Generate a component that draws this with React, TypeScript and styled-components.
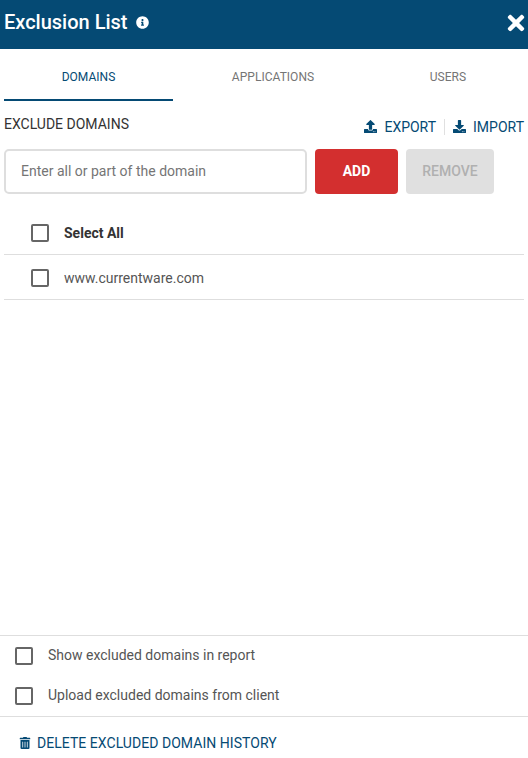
import React from "react";
import styled, { createGlobalStyle } from "styled-components";
import { FaInfoCircle, FaTimes, FaUpload, FaDownload, FaTrashAlt } from "react-icons/fa";

const Global = createGlobalStyle`
  html, body { margin: 0; padding: 0; background: #fff; }
  body { font-family: Roboto, "Liberation Sans", sans-serif; }
  * { box-sizing: border-box; }
`;

const Panel = styled.div`
  width: 528px;
  height: 758px;
  display: flex;
  flex-direction: column;
  overflow: hidden;
`;

const Header = styled.header`
  height: 49px;
  flex: none;
  background: #054a74;
  color: #fff;
  display: flex;
  align-items: center;
  justify-content: space-between;
  padding: 0 0 5px 4px;
`;

const TitleGroup = styled.div`
  display: flex;
  align-items: center;
  gap: 8px;
`;

const Title = styled.h1`
  margin: 0;
  font-size: 20px;
  line-height: 24px;
  font-weight: 500;
`;

const CloseIcon = styled(FaTimes)`
  font-size: 24px;
  margin-top: 2px;
`;

const Tabs = styled.nav`
  height: 52px;
  flex: none;
  display: grid;
  grid-template-columns: 169px 200px 150px;
  padding-left: 4px;
`;

const Tab = styled.div<{ $active?: boolean }>`
  display: flex;
  align-items: center;
  justify-content: center;
  padding-top: 6px;
  font-size: 12px;
  letter-spacing: 0.03px;
  color: ${(p) => (p.$active ? "#054a74" : "#757575")};
  border-bottom: 2px solid ${(p) => (p.$active ? "#054a74" : "transparent")};
`;

const Body = styled.main`
  flex: 1;
  display: flex;
  flex-direction: column;
  padding: 0 4px;
`;

const SectionBar = styled.div`
  height: 48px;
  display: flex;
  align-items: center;
  justify-content: space-between;
`;

const SectionTitle = styled.h2`
  margin: 0 0 2px;
  font-size: 14px;
  line-height: 16px;
  font-weight: 400;
  color: #333;
`;

const Actions = styled.div`
  display: flex;
  align-items: center;
  margin-top: 3px;
`;

const ActionLink = styled.span`
  display: inline-flex;
  align-items: center;
  gap: 7px;
  font-size: 14px;
  color: #054a74;
`;

const Divider = styled.span`
  width: 1px;
  height: 16px;
  background: #e0e0e0;
  margin: 0 8px;
`;

const Form = styled.div`
  display: flex;
  gap: 8px;
  height: 45px;
`;

const Field = styled.div`
  width: 303px;
  border: 2px solid #dedede;
  border-radius: 5px;
  padding: 0 15px 2px;
  display: flex;
  align-items: center;
  font-size: 14px;
  color: #757575;
`;

const Button = styled.button<{ $primary?: boolean }>`
  height: 45px;
  width: ${(p) => (p.$primary ? 83 : 88)}px;
  border: 0;
  border-radius: 4px;
  padding: 0 0 2px;
  font-family: inherit;
  font-size: 14px;
  font-weight: ${(p) => (p.$primary ? 700 : 500)};
  background: ${(p) => (p.$primary ? "#d32f2f" : "#e0e0e0")};
  color: ${(p) => (p.$primary ? "#fff" : "#b0b0b0")};
`;

const List = styled.div`
  margin-top: 16px;
`;

const Row = styled.div`
  height: 45px;
  display: flex;
  align-items: center;
  padding: 2px 0 0 27px;
  gap: 15px;
  border-bottom: 1px solid #dedede;
  width: 520px;
`;

const Box = styled.span`
  display: block;
  width: 18px;
  height: 18px;
  flex: none;
  border: 2px solid #666;
  border-radius: 2px;
`;

const RowLabel = styled.span<{ $bold?: boolean }>`
  font-size: 14px;
  font-weight: ${(p) => (p.$bold ? 700 : 400)};
  color: ${(p) => (p.$bold ? "#333" : "#555")};
`;

const Options = styled.div`
  flex: none;
  height: 82px;
  border-top: 1px solid #dedede;
  border-bottom: 1px solid #dedede;
  display: flex;
  flex-direction: column;
`;

const Option = styled.div`
  height: 40px;
  display: flex;
  align-items: center;
  padding-left: 15px;
  gap: 15px;
`;

const OptionLabel = styled.span`
  font-size: 14px;
  color: #555;
  padding-bottom: 2px;
`;

const Footer = styled.footer`
  flex: none;
  height: 41px;
  display: flex;
  align-items: center;
  gap: 6px;
  padding: 10px 0 0 19px;
  font-size: 14px;
  letter-spacing: 0.04px;
  color: #054a74;
`;

export default function App() {
  return (
    <Panel>
      <Global />
      <Header>
        <TitleGroup>
          <Title>Exclusion List</Title>
          <FaInfoCircle size={13} />
        </TitleGroup>
        <CloseIcon />
      </Header>
      <Tabs>
        <Tab $active>DOMAINS</Tab>
        <Tab>APPLICATIONS</Tab>
        <Tab>USERS</Tab>
      </Tabs>
      <Body>
        <SectionBar>
          <SectionTitle>EXCLUDE DOMAINS</SectionTitle>
          <Actions>
            <ActionLink><FaUpload size={13} />EXPORT</ActionLink>
            <Divider />
            <ActionLink><FaDownload size={13} />IMPORT</ActionLink>
          </Actions>
        </SectionBar>
        <Form>
          <Field>Enter all or part of the domain</Field>
          <Button $primary>ADD</Button>
          <Button>REMOVE</Button>
        </Form>
        <List>
          <Row><Box /><RowLabel $bold>Select All</RowLabel></Row>
          <Row><Box /><RowLabel>www.currentware.com</RowLabel></Row>
        </List>
      </Body>
      <Options>
        <Option><Box /><OptionLabel>Show excluded domains in report</OptionLabel></Option>
        <Option><Box /><OptionLabel>Upload excluded domains from client</OptionLabel></Option>
      </Options>
      <Footer><FaTrashAlt size={12} />DELETE EXCLUDED DOMAIN HISTORY</Footer>
    </Panel>
  );
}
